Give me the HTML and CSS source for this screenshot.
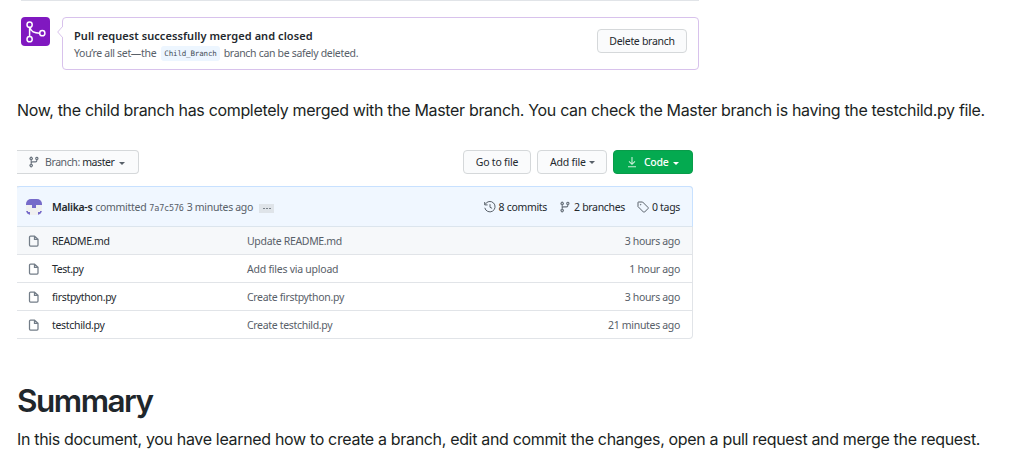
FILE: index.html
```html
<!DOCTYPE html>
<html lang="en">
<head>
<meta charset="utf-8">
<title>Merging a branch</title>
<link rel="stylesheet" href="styles.css">
</head>
<body>
<svg class="defs" width="0" height="0" aria-hidden="true">
  <symbol id="branch" viewBox="0 0 16 16"><path fill-rule="evenodd" d="M11.75 2.5a.75.75 0 100 1.5.75.75 0 000-1.5zm-2.25.75a2.25 2.25 0 113 2.122V6A2.5 2.5 0 0110 8.5H6a1 1 0 00-1 1v1.128a2.251 2.251 0 11-1.5 0V5.372a2.25 2.25 0 111.5 0v1.836A2.492 2.492 0 016 7h4a1 1 0 001-1v-.628A2.25 2.25 0 019.5 3.25zM4.25 12a.75.75 0 100 1.5.75.75 0 000-1.5zM3.5 3.25a.75.75 0 111.5 0 .75.75 0 01-1.5 0z"/></symbol>
  <symbol id="file" viewBox="0 0 12 12"><path d="M2.5 1h4L10 4.3V10q0 1-1 1H2.500q-1 0-1-1V2q0-1 1-1zM6.500 1v3.300H10" fill="none" stroke="#737d88" stroke-width="1.25"/></symbol>
</svg>
<main class="page">
  <section class="merge">
    <div class="merge-icon">
      <svg width="29" height="29" viewBox="0 0 29 29" fill="none" stroke="#fff" stroke-width="1.5"><circle cx="8.6" cy="7.7" r="2.6"/><circle cx="8.6" cy="22.2" r="2.6"/><circle cx="21.3" cy="16.2" r="2.6"/><path d="M8.6 10.4v9.1M8.8 10.5c1.200 3.700 3.700 5.700 9.800 5.700"/></svg>
    </div>
    <div class="merge-box">
      <svg class="pointer" width="6" height="12" viewBox="0 0 6 12"><path d="M6 0L.7 6L6 12" fill="#fff" stroke="#d8c2ec"/></svg>
      <div class="merge-copy">
        <strong class="merge-title">Pull request successfully merged and closed</strong>
        <p class="merge-note"><span>You’re all set—the</span><code>Child_Branch</code><span class="note-end">branch can be safely deleted.</span></p>
      </div>
      <button class="btn delete"><span>Delete branch</span></button>
    </div>
  </section>

  <p class="body-text first">Now, the child branch has completely merged with the Master branch. You can check the Master branch is having the testchild.py file.</p>

  <nav class="toolbar">
    <button class="btn branch-btn"><svg class="ico" width="12" height="12"><use href="#branch"/></svg><span class="branch-label">Branch: <b>master</b></span><i class="caret"></i></button>
    <button class="btn goto"><span>Go to file</span></button>
    <button class="btn add"><span>Add file</span><i class="caret"></i></button>
    <button class="btn code"><svg width="10" height="12" viewBox="0 0 10 12" fill="none" stroke="#c9efd8" stroke-width="1.1"><path d="M5 1v7M2 5.300l3 3 3-3M1 10.700h8"/></svg><span>Code</span><i class="caret"></i></button>
  </nav>

  <section class="files">
    <header class="commit">
      <svg class="avatar" width="16" height="16" viewBox="0 0 16 16"><path fill="#f0f0f0" d="M0 0h16v16H0z"/><path fill="#766bca" d="M0 0h16v6H0zM6 6h4v3H6zM0 12h2v1h2v3H0zM16 12h-2v1h-2v3h4z"/></svg>
      <strong class="author">Malika-s</strong>
      <span class="committed">committed</span>
      <span class="sha">7a7c576</span>
      <span class="ago">3 minutes ago</span>
      <span class="dots"><i></i><i></i><i></i></span>
      <span class="stat commits"><svg width="12" height="12" viewBox="0 0 12 12" fill="none" stroke="#586069" stroke-width="1"><path d="M1.200 3.400A5.200 5.200 0 1 1 .8 6.800M.7 1v2.900h2.900M6 3.200v3.100l2.100 1"/></svg><span>8 commits</span></span>
      <span class="stat branches"><svg class="ico" width="12" height="12"><use href="#branch"/></svg><span>2 branches</span></span>
      <span class="stat tags"><svg width="12" height="12" viewBox="0 0 12 12" fill="none" stroke="#586069" stroke-width="1"><path d="M1 1.400V5.600L6.500 11.100q.5.4 1 0L11.100 7.500q.4-.5 0-1L5.600 1H1.400Q1 1 1 1.400z"/><circle cx="3.700" cy="3.700" r=".3"/></svg><span>0 tags</span></span>
    </header>
    <div class="row hover"><svg width="12" height="12"><use href="#file"/></svg><span class="name tight">README.md</span><span class="message">Update README.md</span><time>3 hours ago</time></div>
    <div class="row"><svg width="12" height="12"><use href="#file"/></svg><span class="name tight">Test.py</span><span class="message wide">Add files via upload</span><time>1 hour ago</time></div>
    <div class="row"><svg width="12" height="12"><use href="#file"/></svg><span class="name">firstpython.py</span><span class="message">Create firstpython.py</span><time>3 hours ago</time></div>
    <div class="row"><svg width="12" height="12"><use href="#file"/></svg><span class="name">testchild.py</span><span class="message">Create testchild.py</span><time>21 minutes ago</time></div>
  </section>

  <h1>Summary</h1>
  <p class="body-text last">In this document, you have learned how to create a branch, edit and commit the changes, open a pull request and merge the request.</p>
</main>
</body>
</html>
```

FILE: styles.css
```css
* { box-sizing: border-box; }
body { margin: 0; background: #fff; color: #1b1f23; font-family: Inter, "Liberation Sans", sans-serif; }
p, h1 { margin: 0; }
.defs { display: block; height: 0; }
.page { width: 1012px; height: 475px; overflow: hidden; padding-left: 17px; }
.merge { width: 678px; margin-left: 4px; height: 70px; padding-top: 16px; border-top: 1px solid #e1e4e8; display: flex; gap: 12px; font-family: "Noto Sans", sans-serif; }
.merge-icon { width: 29px; height: 29px; border-radius: 4px; background: #8018c0; }
.merge-icon svg { display: block; }
.merge-box { position: relative; flex: 1; height: 53px; border: 1px solid #d8c2ec; border-radius: 4px; display: flex; justify-content: space-between; padding: 11px 11px 0 11px; }
.pointer { position: absolute; left: -6px; top: 8px; }
.merge-copy { margin-top: -1px; }
.merge-title { display: block; font-size: 11px; font-weight: 600; line-height: 16px; letter-spacing: .06px; color: #24292e; white-space: nowrap; }
.merge-note { display: flex; align-items: center; font-size: 10.5px; line-height: 16px; margin-top: 1px; color: #586069; white-space: nowrap; letter-spacing: -.32px; }
.merge-note code { font: 7.5px/15px "DejaVu Sans Mono", monospace; letter-spacing: -.15px; color: #444d56; background: #edf6ff; border-radius: 3px; padding: 0 3px; margin: 0 4px 0 5px; }
.btn { display: flex; align-items: center; height: 24px; padding: 0; border: 1px solid #d5d8da; border-radius: 4px; background: #fafbfc; color: #24292e; font: 10.5px/16px "Noto Sans", sans-serif; letter-spacing: -.3px; white-space: nowrap; }
.delete { width: 90px; justify-content: center; }
.body-text { font-size: 16px; line-height: 24px; color: #1b1f23; white-space: nowrap; letter-spacing: -.333px; }
.first { margin-top: 28px; }
.toolbar { display: flex; width: 676px; margin-top: 28px; gap: 6px; }
.ico { fill: #6a737d; flex: none; }
.caret { border: 3px solid transparent; border-top-color: currentColor; border-bottom: 0; }
.branch-btn { width: 122px; margin-right: auto; border-left: 0; border-radius: 0 4px 4px 0; padding-left: 11px; color: #586069; letter-spacing: -.41px; }
.branch-label { margin: 0 5px 0 5px; }
.branch-label b { color: #24292e; font-weight: 400; }
.branch-btn .caret { margin-top: 3px; }
.goto { width: 68px; justify-content: center; letter-spacing: -.2px; }
.add { width: 70px; padding-left: 12px; gap: 3px; letter-spacing: -.2px; }
.add .caret { color: #586069; }
.code { width: 80px; padding-left: 13px; gap: 7px; color: #fff; background: #04aa50; border-color: #099c4a; font-weight: 500; }
.code .caret { margin-top: 3px; margin-left: -2px; }
.files { width: 676px; height: 153px; margin-top: 12px; border: 1px solid #e1e4e8; border-left: 0; border-radius: 0 4px 4px 0; font: 10.5px/16px "Noto Sans", sans-serif; letter-spacing: -.32px; color: #586069; }
.commit { display: flex; align-items: center; height: 41px; margin: -1px -1px 0 0; border: 1px solid #c8e1ff; border-left: 0; border-bottom-color: #dce5ed; border-radius: 3px 4px 0 0; background: #f0f7ff; padding: 1px 12px 0 9px; white-space: nowrap; }
.avatar { border-radius: 5px; margin-right: 10px; }
.author { color: #24292e; font-weight: 600; margin-right: 3px; letter-spacing: -.3px; }
.committed { letter-spacing: -.3px; }
.sha { font: 8.5px "DejaVu Sans Mono", monospace; margin: 1px 3px 0; letter-spacing: -.2px; }
.dots { display: flex; gap: 1px; align-items: center; justify-content: center; width: 15px; height: 9px; margin: 3px 0 0 6px; background: #dfe4e9; }
.dots i { width: 2px; height: 1px; background: #7a828a; }
.stat { display: flex; align-items: center; gap: 3px; color: #24292e; }
.commits { margin-left: auto; }
.branches, .tags { margin-left: 12px; }
.row { display: grid; grid-template-columns: 24px 195px 1fr auto; align-items: center; height: 28px; padding: 0 12px 0 11px; border-bottom: 1px solid #e1e4e8; }
.row:last-child { border-bottom: 0; }
.hover { background: #f6f8fa; }
.name { color: #24292e; }
.tight { letter-spacing: -.42px; }
.wide { letter-spacing: -.24px; }
h1 { margin-top: 41px; font-size: 31.5px; font-weight: 600; line-height: 42px; letter-spacing: -1.5px; color: #1f272c; }
.last { margin-top: 5px; }
```
